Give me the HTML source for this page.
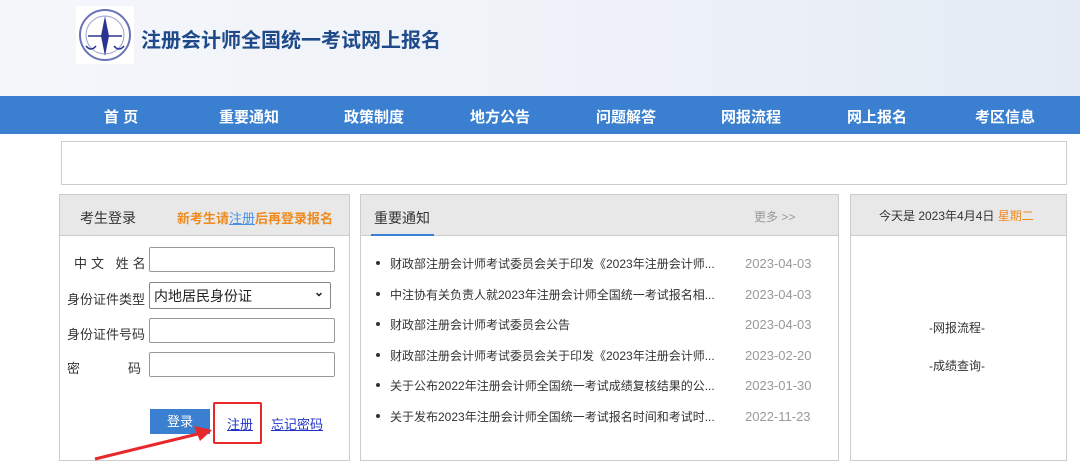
<!DOCTYPE html>
<html><head><meta charset="utf-8"><style>
*{margin:0;padding:0;box-sizing:border-box}
body{width:1080px;height:471px;overflow:hidden;background:#fff;font-family:"Liberation Sans","Noto Sans CJK SC",sans-serif;font-size:13px;color:#333;position:relative}
.hdr{position:absolute;left:0;top:0;width:1080px;height:96px;background:linear-gradient(90deg,#f4f6fa,#eef2f8 60%,#e4ebf5)}
.logo{position:absolute;left:76px;top:6px;width:58px;height:58px;background:#fff}
.title{position:absolute;left:141px;top:24px;font-size:20px;font-weight:bold;color:#1f4a8a}
.nav{position:absolute;left:0;top:96px;width:1080px;height:38px;background:#3a7fd0}
.nav span{position:absolute;top:10px;color:#fff;font-weight:bold;font-size:15px;transform:translateX(-50%);white-space:nowrap}
.banner{position:absolute;left:61px;top:141px;width:1006px;height:44px;border:1px solid #ccc}
.box{position:absolute;top:194px;height:267px;border:1px solid #ccc}
.bh{height:41px;background:#e8e8e8;border-bottom:1px solid #ccc;position:relative}
.lbl{position:absolute;font-size:13px;color:#333;white-space:nowrap}
.inp{position:absolute;left:89px;width:186px;height:25px;border:1px solid #999;border-radius:2px;background:#fff}
.li{position:absolute;left:15px;font-size:12px;line-height:16px;color:#333;white-space:nowrap}
.li:before{content:"";display:inline-block;width:4px;height:4px;border-radius:2px;background:#333;margin-right:10px;vertical-align:3px}
.dt{position:absolute;left:384px;color:#999;font-size:13px;line-height:16px}
</style></head><body>
<div class="hdr"></div>
<div class="logo"><svg width="58" height="58" viewBox="0 0 58 58"><circle cx="29" cy="29" r="25" fill="none" stroke="#6a72b8" stroke-width="2"/><circle cx="29" cy="29" r="19" fill="none" stroke="#9aa0d0" stroke-width="1"/><path d="M29 10 L33 30 L29 50 L25 30Z" fill="#2b3590"/><path d="M12 30 H46" stroke="#2b3590" stroke-width="1.5"/><path d="M10 40 Q15 46 20 40 M38 40 Q43 46 48 40" stroke="#2b3590" fill="none" stroke-width="1.5"/></svg></div>
<div class="title">注册会计师全国统一考试网上报名</div>
<div class="nav">
<span style="left:121px">首 页</span><span style="left:249px">重要通知</span><span style="left:374px">政策制度</span><span style="left:500px">地方公告</span><span style="left:626px">问题解答</span><span style="left:751px">网报流程</span><span style="left:877px">网上报名</span><span style="left:1005px">考区信息</span>
</div>
<div class="banner"></div>

<div class="box" style="left:59px;width:291px">
<div class="bh"><span class="lbl" style="left:20px;top:13px;font-size:14px">考生登录</span><span class="lbl" style="left:117px;top:13px;color:#f08a1c;font-weight:bold;font-size:13px">新考生请<u style="color:#4a90e2;font-weight:normal">注册</u>后再登录报名</span></div>
<span class="lbl" style="left:14px;top:58px;letter-spacing:4px">中文 姓名</span>
<span class="lbl" style="left:7px;top:94px">身份证件类型</span>
<span class="lbl" style="left:7px;top:129px">身份证件号码</span>
<span class="lbl" style="left:7px;top:163px">密</span><span class="lbl" style="left:68px;top:163px">码</span>
<div class="inp" style="top:52px"></div>
<div class="inp" style="top:87px;height:27px;border-color:#888;font-size:14px;padding:3px 4px;color:#222;width:182px">内地居民身份证<span style="position:absolute;right:6px;top:2px;font-size:12px;font-weight:bold">&#8964;</span></div>
<div class="inp" style="top:123px"></div>
<div class="inp" style="top:157px"></div>
<div style="position:absolute;left:90px;top:214px;width:60px;height:25px;background:#3a7fd0;color:#fff;text-align:center;line-height:25px">登录</div>
<div style="position:absolute;left:153px;top:207px;width:49px;height:42px;border:2px solid #e8272a;border-radius:2px"></div>
<u class="lbl" style="left:167px;top:219px;color:#2233cc">注册</u>
<u class="lbl" style="left:211px;top:219px;color:#2233cc">忘记密码</u>
<svg style="position:absolute;left:30px;top:222px" width="130" height="45"><path d="M5 42 L120 14" stroke="#e8272a" stroke-width="3"/><path d="M122 13 L104 9 L110 24Z" fill="#e8272a"/></svg>
</div>

<div class="box" style="left:360px;width:479px">
<div class="bh"><span class="lbl" style="left:13px;top:13px;font-size:14px">重要通知</span><div style="position:absolute;left:10px;bottom:-1px;width:63px;height:2px;background:#3a7fd0"></div><span class="lbl" style="left:393px;top:13px;color:#999;font-size:12px">更多 &gt;&gt;</span></div>
<span class="li" style="top:61px">财政部注册会计师考试委员会关于印发《2023年注册会计师...</span><span class="dt" style="top:61px">2023-04-03</span>
<span class="li" style="top:92px">中注协有关负责人就2023年注册会计师全国统一考试报名相...</span><span class="dt" style="top:92px">2023-04-03</span>
<span class="li" style="top:122px">财政部注册会计师考试委员会公告</span><span class="dt" style="top:122px">2023-04-03</span>
<span class="li" style="top:153px">财政部注册会计师考试委员会关于印发《2023年注册会计师...</span><span class="dt" style="top:153px">2023-02-20</span>
<span class="li" style="top:183px">关于公布2022年注册会计师全国统一考试成绩复核结果的公...</span><span class="dt" style="top:183px">2023-01-30</span>
<span class="li" style="top:214px">关于发布2023年注册会计师全国统一考试报名时间和考试时...</span><span class="dt" style="top:214px">2022-11-23</span>
</div>

<div class="box" style="left:850px;width:217px">
<div class="bh"><span class="lbl" style="left:28px;top:12px;font-size:12px">今天是 2023年4月4日 <span style="color:#f08a1c">星期二</span></span></div>
<span class="lbl" style="left:78px;top:124px;font-size:12px">-网报流程-</span>
<span class="lbl" style="left:78px;top:162px;font-size:12px">-成绩查询-</span>
</div>
</body></html>
